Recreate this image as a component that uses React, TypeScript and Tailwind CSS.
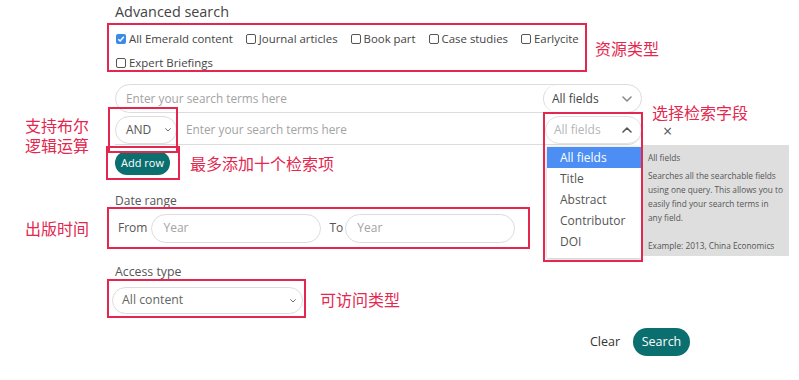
const red = "border-[#e3274f]";

const Chevron = ({ up = false, size = 10, color = "#777" }: { up?: boolean; size?: number; color?: string }) => (
  <svg width={size} height={size * 0.6} viewBox="0 0 10 6" fill="none">
    <path d={up ? "M1 5 L5 1 L9 5" : "M1 1 L5 5 L9 1"} stroke={color} strokeWidth="1.6" strokeLinecap="round" strokeLinejoin="round" />
  </svg>
);

const Check = ({ label, checked = false }: { label: string; checked?: boolean }) => (
  <div className="flex shrink-0 items-center mr-[13px] whitespace-nowrap">
    {checked ? (
      <span className="w-[10px] h-[10px] rounded-[2px] bg-[#3c8ae8] flex items-center justify-center">
        <svg width="8" height="8" viewBox="0 0 8 8">
          <path d="M1.3 4.2 L3.2 6 L6.8 1.8" stroke="white" strokeWidth="1.5" fill="none" />
        </svg>
      </span>
    ) : (
      <span className="w-[10px] h-[10px] rounded-[2px] border border-[#555] bg-white" />
    )}
    <span className="ml-[3px] text-[11.4px] text-[#444]">{label}</span>
  </div>
);

const Note = ({ children, className = "" }: { children: React.ReactNode; className?: string }) => (
  <div className={`text-[16px] leading-[20px] whitespace-nowrap text-[#e3274f] font-['Noto_Sans_CJK_SC',sans-serif] ${className}`}>{children}</div>
);

export default function App() {
  return (
    <div className="relative w-[799px] h-[380px] bg-white overflow-hidden font-['Open_Sans',sans-serif] text-[#444]">
      <div className="h-[23px] pl-[115px] pt-[2px] text-[14.4px] leading-[20px] text-[#444]">Advanced search</div>

      {/* resource types */}
      <div className="flex items-start pl-[107px]">
        <div className={`w-[480px] h-[49px] border-2 ${red} pl-[7px] pt-[2px] overflow-visible`}>
          <div className="flex h-[24px] items-center">
            <Check label="All Emerald content" checked />
            <Check label="Journal articles" />
            <Check label="Book part" />
            <Check label="Case studies" />
            <Check label="Earlycite" />
          </div>
          <div className="flex h-[24px] items-center">
            <Check label="Expert Briefings" />
          </div>
        </div>
        <Note className="ml-[8px] mt-[15px]">资源类型</Note>
      </div>

      {/* search rows */}
      <div className="flex mt-[12px]">
        <div className="w-[107px] shrink-0 pl-[25px] pt-[31px]">
          <Note className="leading-[19px]">支持布尔</Note>
          <Note className="leading-[19px]">逻辑运算</Note>
        </div>
        <div className="flex flex-col">
          <div className="ml-[8px] w-[527px] h-[29px] rounded-full border border-[#dcdcdc] flex items-center">
            <span className="flex-1 pl-[10px] text-[11.8px] text-[#a3a3a3]">Enter your search terms here</span>
            <div className="w-[98px] h-full border-l border-[#dcdcdc] rounded-full flex items-center justify-between pl-[8px] pr-[9px]">
              <span className="text-[12px] text-[#444]">All fields</span>
              <Chevron color="#8a8a8a" />
            </div>
          </div>
          <div className="flex items-center mt-[3px]">
            <div className="ml-[8px] w-[527px] h-[29px] rounded-r-full border-b border-[#dcdcdc] flex items-center">
              <div className="w-[62px] h-full rounded-full border border-[#dcdcdc] flex items-center justify-between pl-[10px] pr-[5px]">
                <span className="text-[12px] text-[#555]">AND</span>
                <Chevron size={6} color="#666" />
              </div>
              <span className="flex-1 pl-[9px] text-[11.8px] text-[#a3a3a3]">Enter your search terms here</span>
              <div className="w-[97px] h-full border border-[#e2e2e2] rounded-full flex items-center justify-between pl-[8px] pr-[9px]">
                <span className="text-[12px] text-[#b5b5b5]">All fields</span>
                <Chevron up color="#555" />
              </div>
            </div>
            <span className="ml-[21px] text-[16px] leading-[14px] text-[#555]">×</span>
          </div>
          <div className="flex items-center mt-[1px]">
            <div className={`-ml-[1px] w-[74px] h-[34px] border-2 ${red} pl-[7px] pt-[3px]`}>
              <div className="w-[55px] h-[24px] rounded-full bg-[#0b6e6f] text-white text-[11px] flex items-center justify-center">Add row</div>
            </div>
            <Note className="ml-[10px]">最多添加十个检索项</Note>
          </div>
        </div>
      </div>

      {/* date range */}
      <div className="pl-[115px] mt-[12px] text-[12px] leading-[18px] text-[#555]">Date range</div>
      <div className="flex items-center -mt-[3px]">
        <div className="w-[107px] shrink-0 pl-[25px]">
          <Note>出版时间</Note>
        </div>
        <div className={`w-[423px] h-[42px] border-2 ${red} flex items-center pl-[9px]`}>
          <span className="text-[12px] text-[#555]">From</span>
          <div className="ml-[4px] w-[170px] h-[29px] rounded-full border border-[#dcdcdc] flex items-center pl-[11px] text-[12px] text-[#a3a3a3]">Year</div>
          <span className="ml-[8px] text-[12px] text-[#555]">To</span>
          <div className="ml-[2px] w-[170px] h-[29px] rounded-full border border-[#dcdcdc] flex items-center pl-[11px] text-[12px] text-[#a3a3a3]">Year</div>
        </div>
      </div>

      {/* access type */}
      <div className="pl-[115px] mt-[14px] text-[12.3px] leading-[18px] text-[#555]">Access type</div>
      <div className="flex items-center -mt-[2px] pl-[107px]">
        <div className={`w-[199px] h-[39px] border-2 ${red} pl-[3px] pt-[6px]`}>
          <div className="w-[191px] h-[27px] rounded-full border border-[#dcdcdc] flex items-center justify-between pl-[9px] pr-[6px]">
            <span className="text-[12.3px] text-[#666]">All content</span>
            <Chevron size={6} color="#666" />
          </div>
        </div>
        <Note className="ml-[14px]">可访问类型</Note>
      </div>

      {/* actions */}
      <div className="flex items-center justify-end w-[690px] mt-[10px]">
        <span className="text-[12.5px] text-[#333]">Clear</span>
        <div className="ml-[13px] w-[57px] h-[28px] rounded-full bg-[#0b6e6f] text-white text-[12.5px] flex items-center justify-center">Search</div>
      </div>

      {/* field dropdown overlay */}
      <div className="absolute left-[547px] top-[147px] w-[94px] h-[111px] bg-white shadow-[0_1px_4px_rgba(0,0,0,0.25)] text-[12px] text-[#555]">
        <div className="h-[21px] bg-[#4c8ef4] text-white pl-[13px] leading-[21px]">All fields</div>
        <div className="h-[21px] pl-[13px] leading-[21px]">Title</div>
        <div className="h-[21px] pl-[13px] leading-[21px]">Abstract</div>
        <div className="h-[21px] pl-[13px] leading-[21px]">Contributor</div>
        <div className="h-[21px] pl-[13px] leading-[21px]">DOI</div>
      </div>
      <div className="absolute left-[643px] top-[145px] w-[146px] h-[111px] bg-[#dedede] pl-[5px] pt-[6px] text-[8.3px] text-[#555] whitespace-nowrap">
        <div className="leading-[13px]">All fields</div>
        <div className="mt-[5px] leading-[14px]">
          Searches all the searchable fields
          <br />
          using one query. This allows you to
          <br />
          easily find your search terms in
          <br />
          any field.
        </div>
        <div className="mt-[14px] leading-[14px]">Example: 2013, China Economics</div>
      </div>

      {/* annotations */}
      <div className={`absolute left-[543px] top-[112px] w-[100px] h-[150px] border-2 ${red}`} />
      <div className={`absolute left-[108px] top-[107px] w-[70px] h-[46px] border-2 ${red}`} />
      <Note className="absolute left-[652px] top-[102px] leading-[18px]">选择检索字段</Note>
    </div>
  );
}
